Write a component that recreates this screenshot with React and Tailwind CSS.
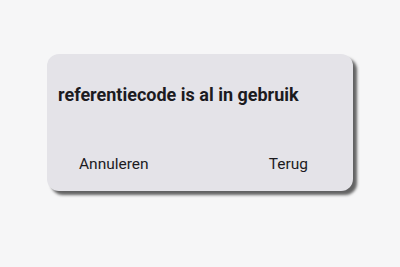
import React from "react";

function App() {
  return (
    <div
      className="w-full h-screen bg-[#f6f6f7] pt-[54px] pl-[47px]"
      style={{ fontFamily: "Roboto, 'Noto Sans', sans-serif" }}
    >
      <div className="w-[306px] h-[137px] rounded-[12px] bg-[#e4e3e8] shadow-[4px_4px_3px_rgba(0,0,0,0.6)] pt-[30px]">
        <h1 className="pl-[11px] text-[18px] leading-[21px] font-bold text-[#1c1b1f]">
          referentiecode is al in gebruik
        </h1>
        <div className="mt-[50px] flex justify-between pl-[32px] pr-[45px] text-[15.5px] leading-[18px] text-[#1c1b1f]">
          <button type="button">Annuleren</button>
          <button type="button">Terug</button>
        </div>
      </div>
    </div>
  );
}

export default App;
